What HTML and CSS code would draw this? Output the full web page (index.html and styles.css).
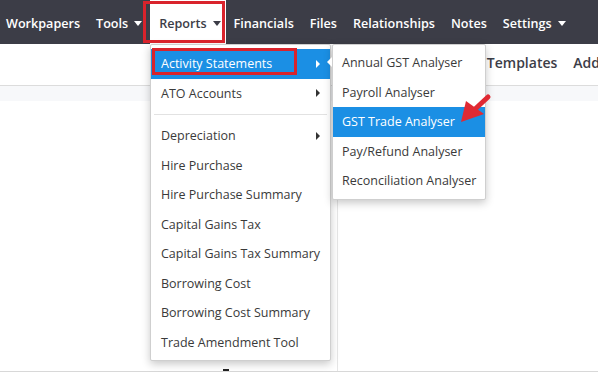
FILE: index.html
```html
<!DOCTYPE html>
<html lang="en">
<head>
  <meta charset="UTF-8" />
  <title>Reports menu</title>
  <link rel="stylesheet" href="styles.css">
</head>
<body>
  <nav class="topnav">
    <a class="nav-item first">Workpapers</a>
    <a class="nav-item">Tools <span class="caret"></span></a>
    <a class="nav-item active">Reports <span class="caret"></span></a>
    <a class="nav-item">Financials</a>
    <a class="nav-item">Files</a>
    <a class="nav-item">Relationships</a>
    <a class="nav-item">Notes</a>
    <a class="nav-item">Settings <span class="caret"></span></a>
  </nav>

  <div class="subnav">
    <span class="sub-item">Templates</span>
    <span class="sub-item">Add</span>
  </div>
  <div class="band"></div>
  <div class="content">
    <div class="table-edge"></div>
  </div>
  <div class="footer-line"><span class="tick"></span></div>

  <!-- Reports dropdown -->
  <ul class="menu menu-reports">
    <li class="menu-row selected">Activity Statements <span class="arrow"></span></li>
    <li class="menu-row">ATO Accounts <span class="arrow"></span></li>
    <li class="divider"></li>
    <li class="menu-row">Depreciation <span class="arrow"></span></li>
    <li class="menu-row">Hire Purchase</li>
    <li class="menu-row">Hire Purchase Summary</li>
    <li class="menu-row">Capital Gains Tax</li>
    <li class="menu-row">Capital Gains Tax Summary</li>
    <li class="menu-row">Borrowing Cost</li>
    <li class="menu-row">Borrowing Cost Summary</li>
    <li class="menu-row">Trade Amendment Tool</li>
  </ul>

  <!-- Activity statements submenu -->
  <ul class="menu menu-sub">
    <li class="menu-row">Annual GST Analyser</li>
    <li class="menu-row">Payroll Analyser</li>
    <li class="menu-row selected">GST Trade Analyser</li>
    <li class="menu-row">Pay/Refund Analyser</li>
    <li class="menu-row">Reconciliation Analyser</li>
  </ul>
  <span class="sub-caret"></span>

  <!-- annotations -->
  <div class="mark mark-reports"></div>
  <div class="mark mark-activity"></div>
  <svg class="pointer" width="40" height="40" viewBox="0 0 40 40">
    <line x1="35" y1="5" x2="20" y2="19" stroke="#e02a33" stroke-width="5" stroke-linecap="round"/>
    <polygon points="8,30 13,9 31,22" fill="#e02a33"/>
  </svg>
</body>
</html>
```

FILE: styles.css
```css
body {
  margin: 0;
  font-family: 'Open Sans', sans-serif;
  background: #fff;
  color: #333;
  width: 598px;
  height: 372px;
  overflow: hidden;
  position: relative;
}
.topnav {
  display: flex;
  align-items: center;
  height: 44px;
  background-color: #3c3d47;
}
.nav-item {
  display: flex;
  align-items: center;
  height: 44px;
  padding: 3px 8px 0;
  box-sizing: border-box;
  color: #fff;
  font-size: 12.6px;
  font-weight: 600;
  white-space: nowrap;
}
.nav-item.first {
  padding-left: 6px;
}
.nav-item.active {
  background: #fff;
  color: #3c3d47;
  padding: 3px 5px 0 9px;
}
.caret {
  display: inline-block;
  margin-left: 6px;
  width: 0;
  height: 0;
  border-left: 4px solid transparent;
  border-right: 4px solid transparent;
  border-top: 5px solid #fff;
}
.active .caret {
  border-top-color: #3c3d47;
}
.subnav {
  display: flex;
  justify-content: flex-end;
  gap: 16px;
  height: 42px;
  box-sizing: border-box;
  padding-bottom: 5px;
  align-items: center;
  border-bottom: 1px solid #dcdcdc;
  overflow: hidden;
}
.sub-item {
  font-size: 14px;
  font-weight: 600;
  color: #3c3d47;
  white-space: nowrap;
}
.sub-item:last-child {
  margin-right: -2px;
}
.band {
  height: 15px;
  background: #f7f8fa;
}
.content {
  height: 270px;
  display: flex;
}
.table-edge {
  width: 337px;
  border-right: 1px solid #e6e6e6;
}
.footer-line {
  position: relative;
  border-top: 1px solid #d8d8d8;
  height: 1px;
}
.tick {
  position: absolute;
  left: 223px;
  top: -3px;
  width: 6px;
  height: 2px;
  background: #222;
}
.menu {
  position: absolute;
  margin: 0;
  padding: 3px 0;
  list-style: none;
  background: #fff;
  border: 1px solid #cfcfcf;
  border-radius: 2px;
  box-shadow: 0 3px 8px rgba(0, 0, 0, 0.22);
  font-size: 12.5px;
}
.menu-reports {
  left: 150px;
  top: 44px;
  padding-top: 4px;
  width: 179px;
}
.menu-sub {
  left: 332px;
  top: 44px;
  width: 152px;
}
.menu-row {
  display: flex;
  align-items: center;
  justify-content: space-between;
  height: 29.5px;
  padding: 0 10px 0 10px;
  white-space: nowrap;
  color: #3a3a3a;
}
.menu-sub .menu-row {
  padding-left: 9px;
}
.menu-row.selected {
  background: #1b8fe4;
  color: #fff;
}
.arrow {
  width: 0;
  height: 0;
  border-top: 4px solid transparent;
  border-bottom: 4px solid transparent;
  border-left: 4px solid #333;
}
.selected .arrow {
  border-left-color: #fff;
}
.divider {
  height: 1px;
  margin: 6px 3px;
  background: #e2e2e2;
}
.sub-caret {
  position: absolute;
  left: 327px;
  top: 57px;
  width: 0;
  height: 0;
  border-top: 5px solid transparent;
  border-bottom: 5px solid transparent;
  border-right: 5px solid #fff;
}
.mark {
  position: absolute;
  border: 3px solid #d9232c;
}
.mark-reports {
  left: 143px;
  top: 1px;
  width: 76px;
  height: 36px;
}
.mark-activity {
  left: 152px;
  top: 48px;
  width: 139px;
  height: 21px;
}
.pointer {
  position: absolute;
  left: 453px;
  top: 92px;
}
```
